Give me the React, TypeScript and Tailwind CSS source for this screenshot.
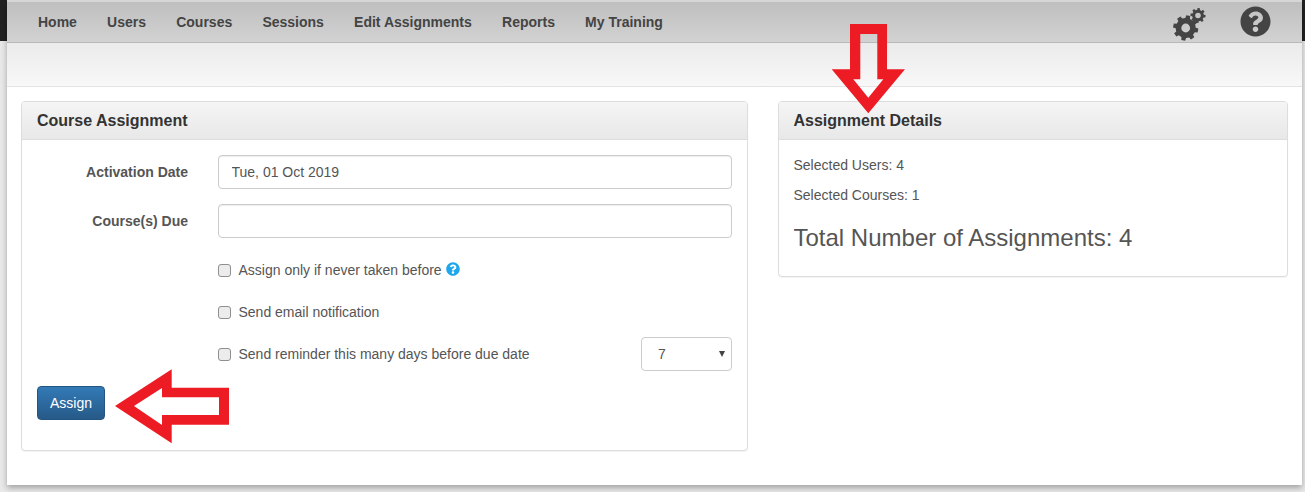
import React from "react";
import { FaQuestionCircle } from "react-icons/fa";

const FONT = "font-['Liberation_Sans',Arial,sans-serif]";

function gearPath(cx: number, cy: number, outer: number, root: number, hole: number, teeth: number, rot = 0) {
  const pts: string[] = [];
  const step = (Math.PI * 2) / teeth;
  for (let i = 0; i < teeth; i++) {
    const a = rot + i * step;
    const seq: [number, number][] = [
      [root, a - step * 0.5],
      [root, a - step * 0.3],
      [outer, a - step * 0.2],
      [outer, a + step * 0.2],
      [root, a + step * 0.3],
    ];
    for (const [r, t] of seq) pts.push(`${(cx + r * Math.cos(t)).toFixed(2)} ${(cy + r * Math.sin(t)).toFixed(2)}`);
  }
  const ring = `M${pts.join("L")}Z`;
  const h = `M${cx - hole} ${cy}a${hole} ${hole} 0 1 0 ${hole * 2} 0a${hole} ${hole} 0 1 0 ${-hole * 2} 0Z`;
  return ring + h;
}

function Gears() {
  return (
    <svg width="34" height="34" viewBox="0 0 34 34" className="block">
      <path fill="#444" fillRule="evenodd" d={gearPath(12.7, 21, 12.7, 10, 4.4, 8, 0.2)} />
      <path fill="#444" fillRule="evenodd" d={gearPath(25, 8.5, 7.6, 5.8, 2.8, 8, 0.1)} />
    </svg>
  );
}

function Panel({ title, className, pad, children }: { title: string; className: string; pad: string; children: React.ReactNode }) {
  return (
    <section className={`rounded border border-[#ddd] bg-white shadow-[0_1px_1px_rgba(0,0,0,0.05)] ${className}`}>
      <h2 className={`h-[38px] rounded-t-[3px] border-b border-[#ddd] bg-gradient-to-b from-[#f5f5f5] to-[#e8e8e8] text-[16px] leading-[37px] font-bold text-[#333] ${pad}`}>
        {title}
      </h2>
      {children}
    </section>
  );
}

function Field({ label, value }: { label: string; value?: string }) {
  return (
    <div className="flex items-center">
      <label className="w-[166px] shrink-0 text-right text-[14px] font-bold text-[#555]">{label}</label>
      <input
        readOnly
        value={value ?? ""}
        className="ml-[30px] h-[34px] w-[514px] rounded border border-[#ccc] bg-white px-[12.5px] text-[14px] text-[#555] shadow-[inset_0_1px_1px_rgba(0,0,0,0.075)] outline-none"
      />
    </div>
  );
}

function Check({ label, children }: { label: string; children?: React.ReactNode }) {
  return (
    <label className="flex items-center text-[14px] text-[#555]">
      <input
        type="checkbox"
        className="h-[13px] w-[13px] appearance-none rounded-[3px] border border-[#8f8f8f] bg-[#ececec]"
      />
      <span className="ml-[7.5px]">{label}</span>
      {children}
    </label>
  );
}

export default function App() {
  const nav = ["Home", "Users", "Courses", "Sessions", "Edit Assignments", "Reports", "My Training"];
  return (
    <div className={`relative h-[492px] w-[1305px] overflow-hidden bg-[#e9e9e9] ${FONT}`}>
      <div className="absolute top-0 left-0 h-[41px] w-full bg-[#222]" />
      <div className="relative mr-[3px] ml-[7px] flex h-[485px] flex-col bg-white shadow-[0_3px_6px_rgba(0,0,0,0.3)]">
        <header className="flex h-[43px] shrink-0 items-center border-t-2 border-b border-t-[#d6d6d6] border-b-[#b9b9b9] bg-gradient-to-b from-[#bfbfbf] to-[#d2d2d2] pr-[31px] pl-[31px]">
          <nav className="flex gap-[30.2px] text-[14px] font-bold text-[#444]">
            {nav.map((n) => (
              <a key={n}>{n}</a>
            ))}
          </nav>
          <div className="ml-auto flex items-center gap-[33px]">
            <div className="mt-[3px]">
              <Gears />
            </div>
            <FaQuestionCircle size={31} className="-mt-[2px] text-[#444]" />
          </div>
        </header>
        <div className="h-[44px] shrink-0 border-b border-[#e3e3e3] bg-gradient-to-b from-[#ebebeb] to-[#f8f8f8]" />
        <main className="flex flex-1 items-start gap-[30px] pt-[14px] pl-[14px]">
          <Panel title="Course Assignment" className="h-[350px] w-[727px]" pad="pl-[15px]">
            <div className="flex flex-col pt-[15px] pr-[15px] pl-[15px]">
              <div className="-ml-[15px] flex flex-col gap-[15px]">
                <Field label="Activation Date" value="Tue, 01 Oct 2019" />
                <Field label="Course(s) Due" />
              </div>
              <div className="mt-[22px] ml-[181px] flex flex-col">
                <div className="flex h-[20px] items-center">
                  <Check label="Assign only if never taken before">
                    <FaQuestionCircle size={14} className="ml-[4px] -translate-y-[1px] text-[#1ea7ec]" />
                  </Check>
                </div>
                <div className="mt-[22px] flex h-[20px] items-center">
                  <Check label="Send email notification" />
                </div>
                <div className="mt-[15px] flex h-[34px] items-center justify-between">
                  <Check label="Send reminder this many days before due date" />
                  <div className="relative mr-0">
                    <select className="h-[34px] w-[91px] appearance-none rounded border border-[#ccc] bg-white pl-[16px] text-[14px] text-[#555] outline-none">
                      <option>7</option>
                    </select>
                    <span className="absolute top-[14px] right-[7px] h-0 w-0 border-x-[3px] border-t-[6px] border-x-transparent border-t-[#444]" />
                  </div>
                </div>
              </div>
              <button className="mt-[15px] h-[34px] w-[68px] rounded border border-[#245580] bg-gradient-to-b from-[#337ab7] to-[#265a88] text-[14px] text-white">
                Assign
              </button>
            </div>
          </Panel>
          <Panel title="Assignment Details" className="h-[176px] w-[510px]" pad="pl-[14.5px]">
            <div className="px-[14.5px] pt-[15px] text-[14px] leading-[20px] text-[#555]">
              <p>Selected Users: 4</p>
              <p className="mt-[10px]">Selected Courses: 1</p>
              <p className="mt-[20px] text-[24px] leading-[26px]">Total Number of Assignments: 4</p>
            </div>
          </Panel>
        </main>
      </div>
      <svg className="pointer-events-none absolute top-0 left-0" width="1305" height="492" viewBox="0 0 1305 492">
        <path
          fill="#ed1c24"
          fillRule="evenodd"
          d="M850 24H887V69.3H905L868.3 113.3L831.7 69.3H850ZM860.3 34V79.3H853.3L868.3 97.7L883.3 79.3H877.3V34Z"
        />
        <path
          fill="#ed1c24"
          fillRule="evenodd"
          d="M115 406L171.7 369.3V387.7H229V424.7H171.7V443.3ZM134 406L162 425V415H219V397.3H162V388Z"
        />
      </svg>
    </div>
  );
}
